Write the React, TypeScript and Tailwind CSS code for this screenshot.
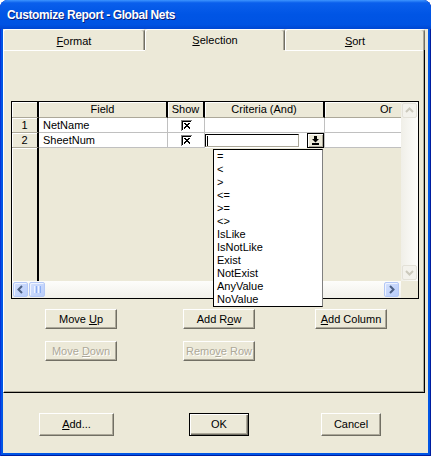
import type { ReactNode } from "react";

function U({ children }: { children: ReactNode }) {
  return <span className="underline underline-offset-[1px]">{children}</span>;
}

function Button({
  children,
  className = "",
  disabled = false,
  isDefault = false,
}: {
  children: ReactNode;
  className?: string;
  disabled?: boolean;
  isDefault?: boolean;
}) {
  const frame = isDefault
    ? "border border-black shadow-[inset_1px_1px_0_#fff,inset_-1px_-1px_0_#716f64,inset_-2px_-2px_0_#aca899]"
    : "border border-t-white border-l-white border-r-[#716f64] border-b-[#716f64] shadow-[inset_-1px_-1px_0_#aca899]";
  const text = disabled ? "text-[#aca899] [text-shadow:1px_1px_0_#fff]" : "text-black";
  return (
    <div className={`flex items-center justify-center bg-[#ece9d8] ${frame} ${text} ${className}`}>
      <span className="whitespace-pre">{children}</span>
    </div>
  );
}

function Tab({ children, selected = false, className = "" }: { children: ReactNode; selected?: boolean; className?: string }) {
  const body =
    "rounded-t-[3px] border-t border-l border-r border-t-white border-l-white border-r-[#716f64] shadow-[inset_-1px_0_0_#aca899] flex items-center justify-center";
  if (selected) {
    return <div className={`h-[21px] pt-[1px] ${body} ${className}`}>{children}</div>;
  }
  return (
    <div className={`h-[21px] flex flex-col ${className}`}>
      <div className={`flex-1 pt-[3px] ${body}`}>{children}</div>
      <div className="h-px bg-black" />
      <div className="h-px bg-white" />
    </div>
  );
}

function CheckBox() {
  const diag = [0, 1, 2, 3, 4];
  return (
    <svg width="11" height="11" viewBox="0 0 11 11" shapeRendering="crispEdges">
      <rect x="0" y="0" width="11" height="11" fill="#fff" />
      <rect x="0" y="0" width="11" height="1" fill="#808080" />
      <rect x="0" y="0" width="1" height="11" fill="#808080" />
      <rect x="1" y="1" width="9" height="1" fill="#000" />
      <rect x="1" y="1" width="1" height="9" fill="#000" />
      {diag.map((i) => (
        <rect key={`a${i}`} x={3 + i} y={3 + i} width="2" height="1" fill="#000" />
      ))}
      {diag.map((i) => (
        <rect key={`b${i}`} x={7 - i} y={3 + i} width="2" height="1" fill="#000" />
      ))}
      <rect x="8" y="8" width="1" height="1" fill="#000" />
      <rect x="3" y="8" width="1" height="1" fill="#000" />
    </svg>
  );
}

function DropArrow() {
  return (
    <svg width="7" height="9" viewBox="0 0 7 9" shapeRendering="crispEdges">
      <rect x="2" y="0" width="3" height="3" fill="#000" />
      <polygon points="0,3 7,3 3.5,6.5" fill="#000" shapeRendering="auto" />
      <rect x="0" y="7" width="7" height="2" fill="#000" />
    </svg>
  );
}

function ScrollBtn({ dir, disabled = false }: { dir: "up" | "down" | "left" | "right"; disabled?: boolean }) {
  const paths = {
    up: "M4 9L7.5 5.5L11 9",
    down: "M4 6L7.5 9.5L11 6",
    left: "M9 4L5.5 7.5L9 11",
    right: "M6 4L9.5 7.5L6 11",
  };
  const frame = disabled
    ? "border-[#e3e1d8] bg-[#f3f2ec]"
    : "border-[#b4c8f6] bg-[linear-gradient(135deg,#d3e0fd,#b9cdfa)] shadow-[inset_1px_1px_0_#eef3ff]";
  return (
    <div className={`w-[15px] h-[15px] rounded-[2px] border ${frame}`}>
      <svg width="13" height="13" viewBox="1 1 13 13">
        <path d={paths[dir]} fill="none" stroke={disabled ? "#cbc9bc" : "#4d6185"} strokeWidth="2" />
      </svg>
    </div>
  );
}

const hdr =
  "flex items-center justify-center bg-[#ece9d8] border-r-2 border-r-black border-b border-b-[#aca899] shadow-[inset_1px_1px_0_#fff]";
const cell = "bg-white border-r border-b border-[#c0c0c0] flex items-center";
const ops = ["=", "<", ">", "<=", ">=", "<>", "IsLike", "IsNotLike", "Exist", "NotExist", "AnyValue", "NoValue"];

function Grid() {
  return (
    <div className="ml-[7px] mt-[51px] w-[408px] h-[198px] border border-black flex flex-col">
      <div className="flex h-[179px]">
        <div className="w-[389px] flex flex-col">
          <div className="flex h-[16px]">
            <div className={`w-[27px] ${hdr}`} />
            <div className={`w-[129px] ${hdr}`}>Field</div>
            <div className={`w-[37px] ${hdr}`}>Show</div>
            <div className={`w-[120px] ${hdr}`}>Criteria (And)</div>
            <div className="w-[76px] bg-[#ece9d8] border-b border-b-[#aca899] shadow-[inset_1px_1px_0_#fff] flex items-center pl-[55px]">
              Or
            </div>
          </div>

          <div className="flex h-[15px]">
            <div className={`w-[27px] ${hdr}`}>1</div>
            <div className={`w-[129px] pl-[4px] ${cell}`}>NetName</div>
            <div className={`w-[37px] justify-center ${cell}`}>
              <CheckBox />
            </div>
            <div className={`w-[120px] ${cell}`} />
            <div className="w-[76px] bg-white border-b border-[#c0c0c0]" />
          </div>

          <div className="flex h-[15px]">
            <div className={`w-[27px] ${hdr}`}>2</div>
            <div className={`w-[129px] pl-[4px] ${cell}`}>SheetNum</div>
            <div className={`w-[37px] justify-center ${cell}`}>
              <CheckBox />
            </div>
            <div className="w-[120px] bg-white border-r border-[#c0c0c0] relative flex items-start z-10">
              <div className="w-[94px] h-[13px] mt-[1px] bg-white border-t border-l border-black border-r border-b border-r-[#aca899] border-b-[#aca899] flex items-center">
                <div className="ml-[1px] w-px h-[10px] bg-black" />
              </div>
              <div className="flex-1" />
              <div className="w-[17px] h-[15px] border border-black bg-[#ece9d8] shadow-[inset_1px_1px_0_#fff,inset_-1px_-1px_0_#aca899] flex items-center justify-center">
                <DropArrow />
              </div>
              <div className="absolute left-[8px] top-[16px] w-[110px] h-[158px] bg-white border border-black border-r-[#808080] flex flex-col">
                {ops.map((o) => (
                  <div key={o} className="h-[13px] leading-[13px] pl-[3px] whitespace-pre">
                    {o}
                  </div>
                ))}
              </div>
            </div>
            <div className="w-[76px] bg-white border-b border-[#c0c0c0]" />
          </div>

          <div className="flex flex-1">
            <div className="w-[27px] bg-[#ece9d8] border-r-2 border-r-black shadow-[inset_1px_1px_0_#fff]" />
            <div className="flex-1 bg-[#ece9d8]" />
          </div>
        </div>

        <div className="w-[17px] flex flex-col items-center py-[1px] bg-[linear-gradient(to_right,#f0efe8,#fdfdfb)]">
          <ScrollBtn dir="up" disabled />
          <div className="flex-1" />
          <ScrollBtn dir="down" disabled />
        </div>
      </div>

      <div className="flex h-[17px]">
        <div className="w-[389px] flex items-center pl-[1px] pr-[2px] bg-[linear-gradient(to_bottom,#fdfdfb,#f1f0ea)]">
          <ScrollBtn dir="left" />
          <div className="ml-[1px] w-[16px] h-[15px] rounded-[2px] border border-[#b4c8f6] bg-[linear-gradient(135deg,#d3e0fd,#b9cdfa)] shadow-[inset_1px_1px_0_#eef3ff] flex items-center justify-center gap-[1px]">
            <div className="w-px h-[7px] bg-[#eef3ff]" />
            <div className="w-px h-[7px] bg-[#8caef4]" />
            <div className="w-px h-[7px] bg-[#eef3ff]" />
            <div className="w-px h-[7px] bg-[#8caef4]" />
          </div>
          <div className="flex-1" />
          <ScrollBtn dir="right" />
        </div>
        <div className="w-[17px] bg-[#ece9d8]" />
      </div>
    </div>
  );
}

export default function App() {
  return (
    <div className="w-[431px] h-[456px] bg-white font-['Liberation_Sans',Arial,sans-serif] text-[11px] text-black">
      <div className="w-full h-full flex flex-col rounded-t-[8px] bg-[#0055e5] shadow-[inset_1px_0_0_#0831d9,inset_-1px_0_0_#001ea0,inset_0_-1px_0_#001ea0]">
        <div className="h-[29px] shrink-0 rounded-t-[8px] flex items-center pl-[7px] pt-[1px] bg-[linear-gradient(to_bottom,#3d95ff_0%,#0a5fec_10%,#0055e5_50%,#0053e3_85%,#0046d1_100%)] text-white font-bold text-[12px] tracking-[-0.4px] [text-shadow:1px_1px_0_#0a1f7a]">
          Customize Report - Global Nets
        </div>

        <div className="mx-[3px] mb-[3px] flex-1 bg-[#ece9d8] flex flex-col">
          <div className="flex">
            <Tab className="w-[142px]">
              <span>
                <U>F</U>ormat
              </span>
            </Tab>
            <Tab selected className="w-[140px]">
              <span>
                <U>S</U>election
              </span>
            </Tab>
            <Tab className="w-[140px]">
              <span>
                <U>S</U>ort
              </span>
            </Tab>
          </div>

          <div className="w-[422px] h-[343px] flex flex-col border-l border-l-white border-r border-b border-r-black border-b-black shadow-[inset_-1px_-1px_0_#aca899]">
            <Grid />

            <div className="flex mt-[10px] ml-[41px]">
              <Button className="w-[72px] h-[20px]">
                Move <U>U</U>p
              </Button>
              <Button className="w-[72px] h-[20px] ml-[66px]">
                Add R<U>o</U>w
              </Button>
              <Button className="w-[72px] h-[20px] ml-[60px]">
                <U>A</U>dd Column
              </Button>
            </div>
            <div className="flex mt-[12px] ml-[41px]">
              <Button disabled className="w-[72px] h-[20px]">
                Move <U>D</U>own
              </Button>
              <Button disabled className="w-[72px] h-[20px] ml-[66px]">
                Remo<U>v</U>e Row
              </Button>
            </div>
          </div>

          <div className="flex mt-[20px] ml-[36px]">
            <Button className="w-[75px] h-[23px]">
              <U>A</U>dd...
            </Button>
            <Button isDefault className="w-[60px] h-[23px] ml-[75px]">
              OK
            </Button>
            <Button className="w-[60px] h-[23px] ml-[72px]">Cancel</Button>
          </div>
        </div>
      </div>
    </div>
  );
}
